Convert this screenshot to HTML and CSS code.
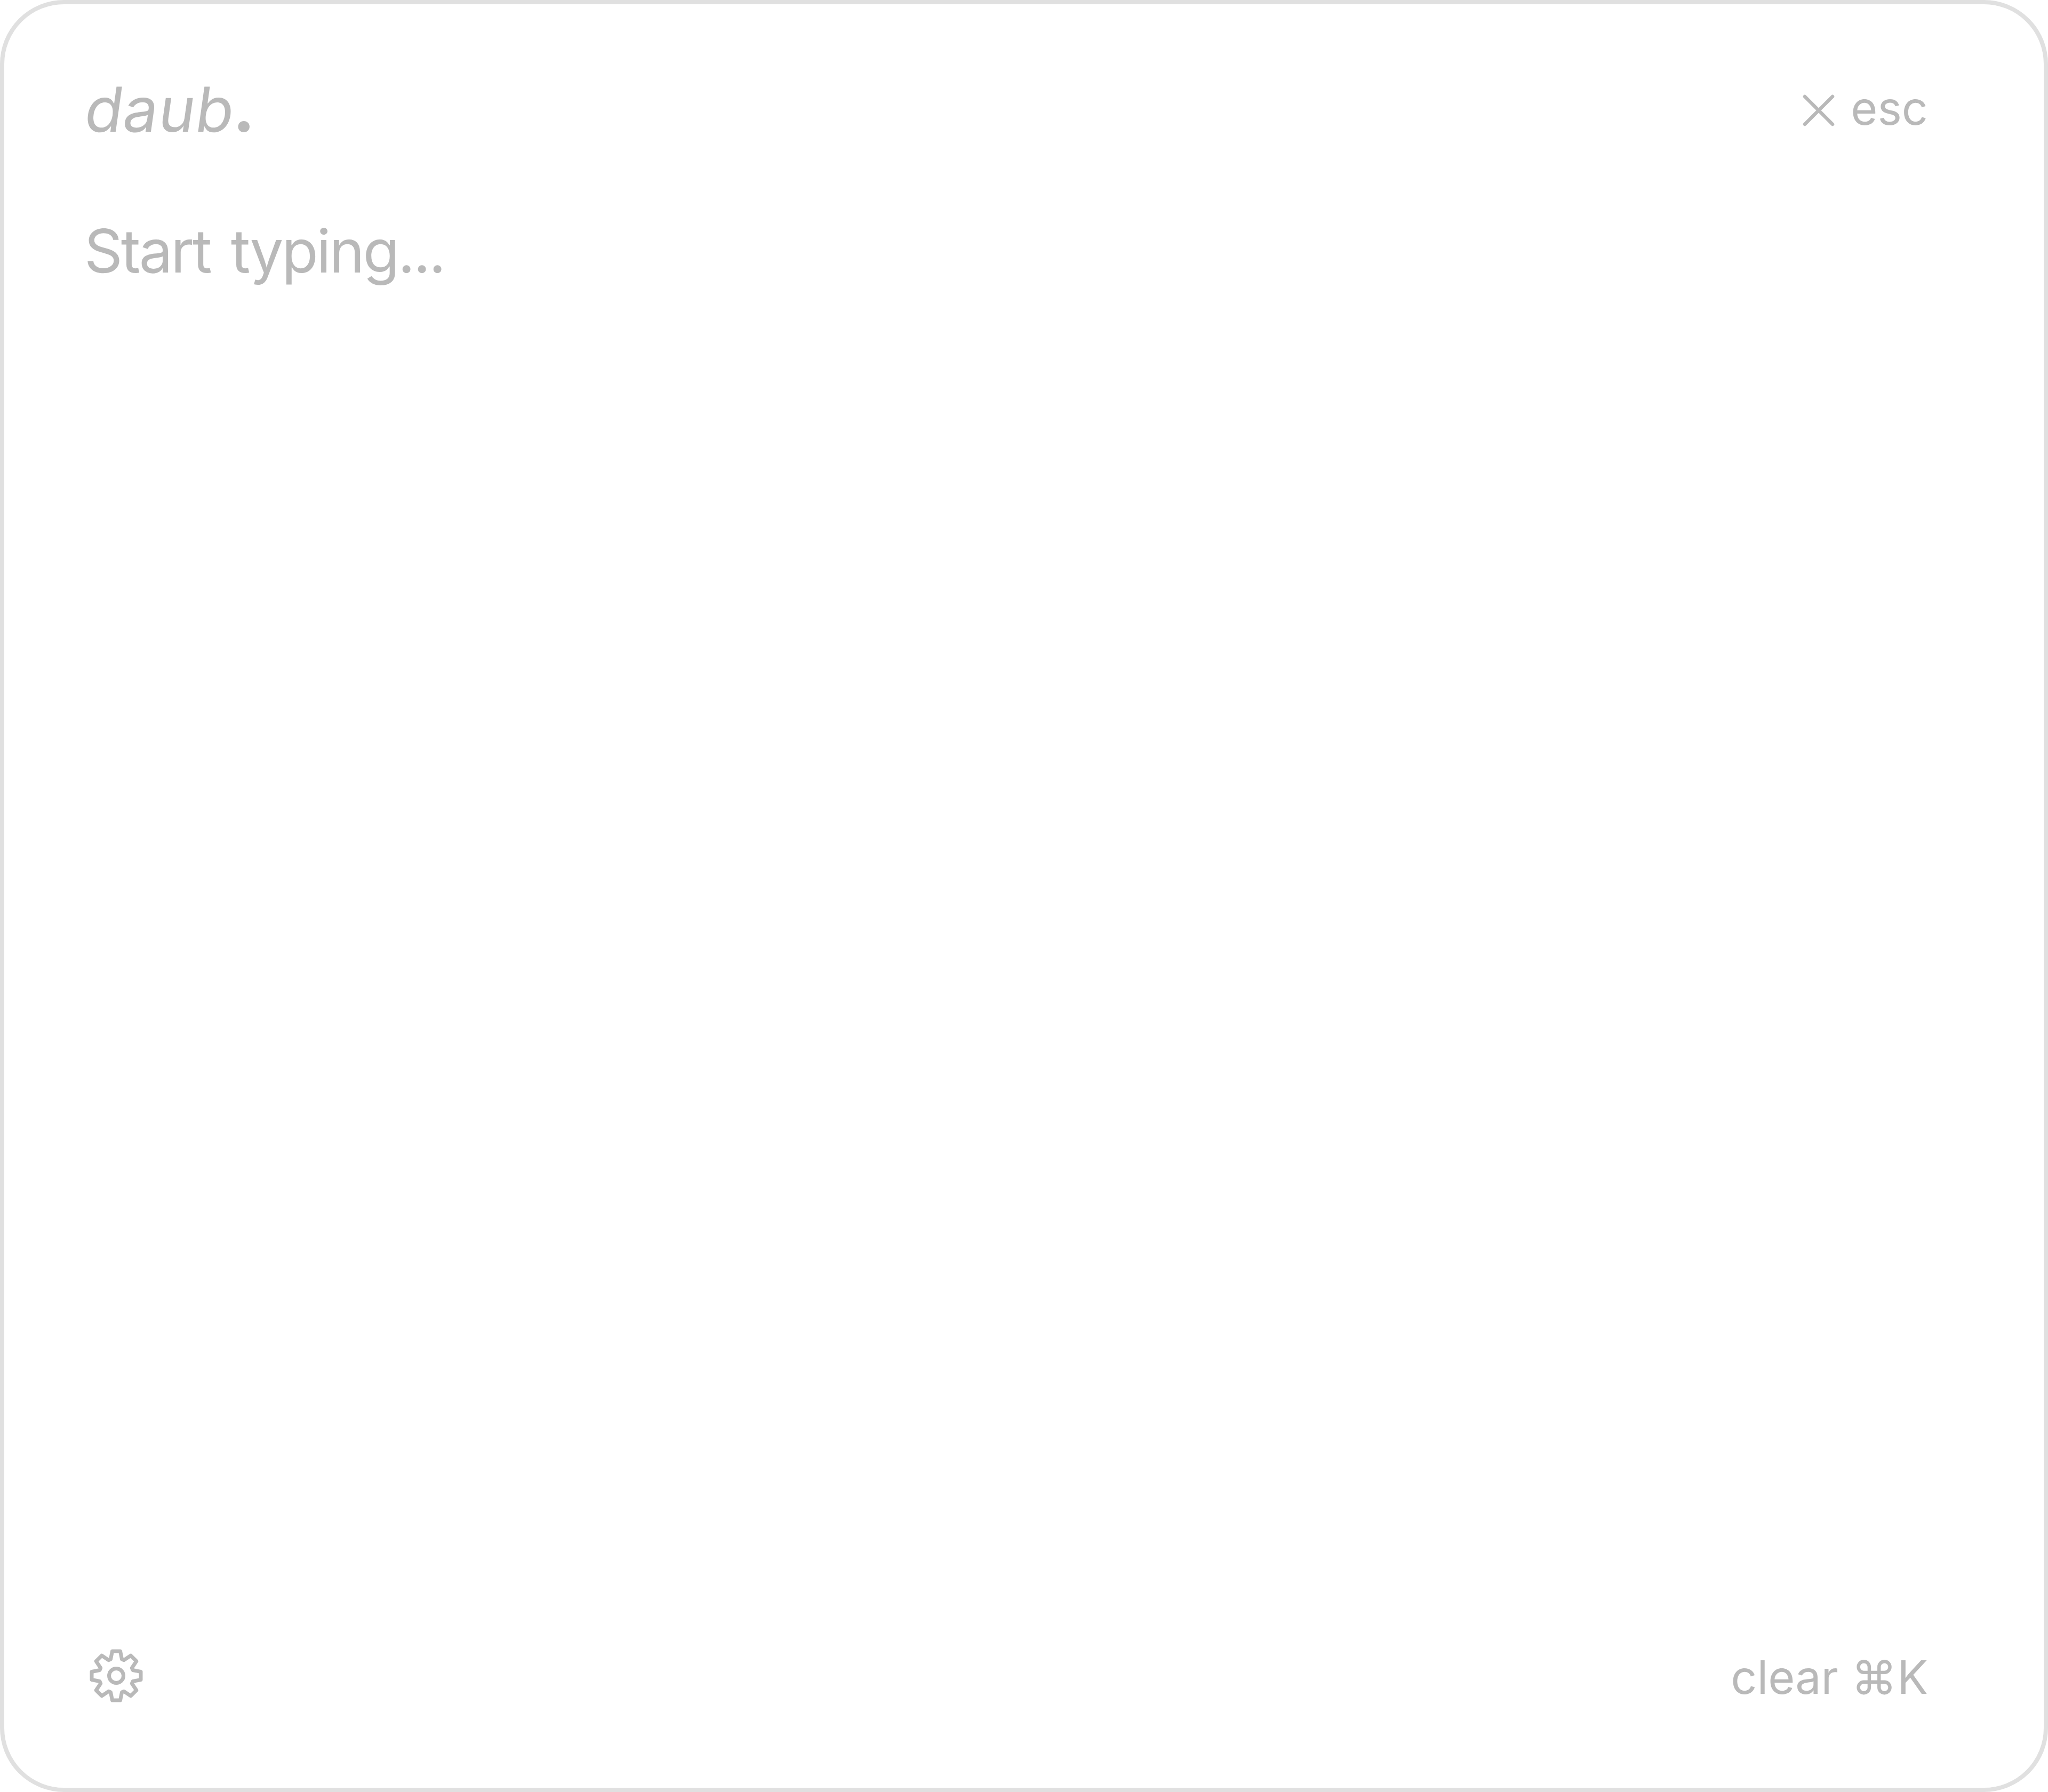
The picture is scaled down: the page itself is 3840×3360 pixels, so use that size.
FILE: index.html
```html
<!DOCTYPE html>
<html lang="en">
<head>
<meta charset="utf-8">
<title>daub</title>
<link rel="stylesheet" href="styles.css">
</head>
<body>
<main class="card">
  <header class="top">
    <div class="logo"><span class="logo-word">daub</span><span class="logo-dot">.</span></div>
    <button class="action esc">
      <svg class="x-icon" viewBox="0 0 60 60" aria-hidden="true"><path d="M4 4 56 56M56 4 4 56"/></svg>
      <span class="esc-label">esc</span>
    </button>
  </header>
  <div class="editor">Start typing...</div>
  <footer class="bottom">
    <svg class="gear" viewBox="-50 -50 100 100" aria-hidden="true">
      <path d="M-10.5-31-7.5-46H7.5L10.5-31 14.5-29.3 27.2-37.8 37.8-27.2 29.3-14.5 31-10.5 46-7.5V7.5L31 10.5 29.3 14.5 37.8 27.2 27.2 37.8 14.5 29.3 10.5 31 7.5 46H-7.5L-10.5 31-14.5 29.3-27.2 37.8-37.8 27.2-29.3 14.5-31 10.5-46 7.5V-7.5L-31-10.5-29.3-14.5-37.8-27.2-27.2-37.8-14.5-29.3Z"/>
      <circle r="13.5"/>
    </svg>
    <button class="action">clear ⌘K</button>
  </footer>
</main>
</body>
</html>
```
FILE: styles.css
```css
html, body { margin: 0; padding: 0; background: #fff; }
.card {
  box-sizing: border-box;
  width: 3840px;
  height: 3360px;
  border: 8px solid #e0e0e0;
  border-radius: 120px;
  background: #fff;
  padding: 147px 217px 155px 152px;
  display: flex;
  flex-direction: column;
  font-family: Inter, "Liberation Sans", sans-serif;
  color: #b9b9b9;
}
.top { display: flex; justify-content: space-between; align-items: center; height: 104px; }
.logo { display: flex; font-size: 116px; line-height: 104px; margin-top: -4px; }
.logo-word { display: block; font-weight: 400; transform: skewX(-8deg); transform-origin: 0 82%; letter-spacing: 1px; margin-left: -4px; }
.logo-dot { font-weight: 800; margin-left: 1px; }
.action {
  display: flex; align-items: center; gap: 30px;
  padding: 0; border: 0; background: none;
  font: inherit; font-size: 86px; line-height: 96px; color: inherit;
}
.esc-label { margin-bottom: 8px; }
.x-icon { width: 60px; height: 60px; fill: none; stroke: #b9b9b9; stroke-width: 6.5; stroke-linecap: round; }
.editor { margin-top: 143px; font-size: 112px; line-height: 136px; letter-spacing: -3.2px; word-spacing: 10px; flex: 1; margin-left: -2px; }
.bottom { display: flex; justify-content: space-between; align-items: center; }
.gear { width: 100px; height: 100px; margin-left: 8px; margin-bottom: 5px; fill: none; stroke: #b9b9b9; stroke-width: 7; stroke-linejoin: round; }
```
